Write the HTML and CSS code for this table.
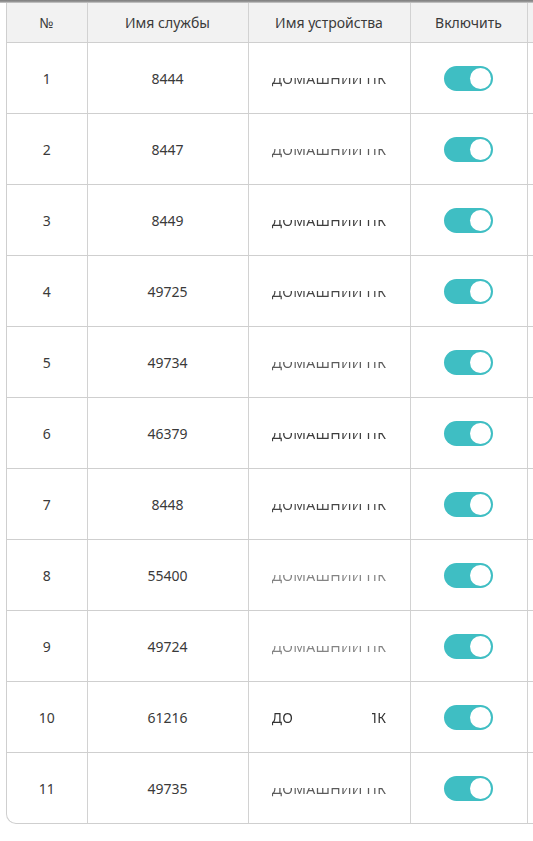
FILE: index.html
```html
<!DOCTYPE html>
<html lang="ru">
<head>
<meta charset="utf-8">
<link rel="stylesheet" href="styles.css">
</head>
<body>
<div class="topline"></div>
<div class="wrap">
<table class="grid">
<colgroup>
<col class="c-num"><col class="c-svc"><col class="c-dev"><col class="c-on"><col class="c-extra">
</colgroup>
<thead>
<tr><th>№</th><th>Имя службы</th><th>Имя устройства</th><th>Включить</th><th></th></tr>
</thead>
<tbody>
<tr><td>1</td><td>8444</td><td><span class="dev m1">ДОМАШНИЙ ПК</span></td><td><span class="sw"><span class="knob"></span></span></td><td></td></tr>
<tr><td>2</td><td>8447</td><td><span class="dev m2">ДОМАШНИЙ ПК</span></td><td><span class="sw"><span class="knob"></span></span></td><td></td></tr>
<tr><td>3</td><td>8449</td><td><span class="dev m3">ДОМАШНИЙ ПК</span></td><td><span class="sw"><span class="knob"></span></span></td><td></td></tr>
<tr><td>4</td><td>49725</td><td><span class="dev m1">ДОМАШНИЙ ПК</span></td><td><span class="sw"><span class="knob"></span></span></td><td></td></tr>
<tr><td>5</td><td>49734</td><td><span class="dev m2">ДОМАШНИЙ ПК</span></td><td><span class="sw"><span class="knob"></span></span></td><td></td></tr>
<tr><td>6</td><td>46379</td><td><span class="dev m3">ДОМАШНИЙ ПК</span></td><td><span class="sw"><span class="knob"></span></span></td><td></td></tr>
<tr><td>7</td><td>8448</td><td><span class="dev m1">ДОМАШНИЙ ПК</span></td><td><span class="sw"><span class="knob"></span></span></td><td></td></tr>
<tr><td>8</td><td>55400</td><td><span class="dev m4">ДОМАШНИЙ ПК</span></td><td><span class="sw"><span class="knob"></span></span></td><td></td></tr>
<tr><td>9</td><td>49724</td><td><span class="dev m4">ДОМАШНИЙ ПК</span></td><td><span class="sw"><span class="knob"></span></span></td><td></td></tr>
<tr><td>10</td><td>61216</td><td><span class="dev m5">ДОМАШНИЙ ПК</span></td><td><span class="sw"><span class="knob"></span></span></td><td></td></tr>
<tr class="last"><td>11</td><td>49735</td><td><span class="dev m2">ДОМАШНИЙ ПК</span></td><td><span class="sw"><span class="knob"></span></span></td><td></td></tr>
</tbody>
</table>
</div>
</body>
</html>
```
FILE: styles.css
```css
html, body {
  margin: 0;
  padding: 0;
  background: #ffffff;
}
body {
  width: 533px;
  height: 841px;
  overflow: hidden;
  font-family: "Noto Sans", "Open Sans", sans-serif;
  color: #3a3a3a;
}
.topline {
  height: 3px;
  background: linear-gradient(to bottom, #7d7d7d, #9a9a9a 60%, #d6d6d6);
}
.wrap {
  margin-left: 6px;
  width: 527px;
  border-left: 1px solid #cfcfcf;
  border-bottom: 1px solid #cfcfcf;
  border-bottom-left-radius: 10px;
  overflow: hidden;
  box-sizing: border-box;
}
.grid {
  border-collapse: collapse;
  table-layout: fixed;
  width: 620px;
}
.c-num { width: 80px; }
.c-svc { width: 161px; }
.c-dev { width: 162px; }
.c-on { width: 117px; }
.c-extra { width: 100px; }
.grid th {
  height: 39px;
  padding: 0;
  background: #f2f2f2;
  font-weight: 400;
  font-size: 14px;
  color: #3a3a3a;
  text-align: center;
  border-right: 1px solid #d2d2d2;
  border-bottom: 1px solid #cfcfcf;
}
.grid td {
  height: 70px;
  padding: 0;
  font-size: 14px;
  text-align: center;
  border-right: 1px solid #d2d2d2;
  border-bottom: 1px solid #cfcfcf;
}
.grid tr.last td {
  border-bottom: none;
}
.dev {
  display: inline-block;
  color: #333333;
  letter-spacing: 0.3px;
  -webkit-mask-image: linear-gradient(to bottom, transparent 48%, #000 48%);
  mask-image: linear-gradient(to bottom, transparent 48%, #000 48%);
}
.m1 { opacity: 0.9; }
.m2 { opacity: 0.8; }
.m3 { opacity: 0.95; }
.m4 { opacity: 0.6; }
.m5 {
  -webkit-mask-image: linear-gradient(to right, #000 18%, transparent 18%, transparent 88%, #000 88%);
  mask-image: linear-gradient(to right, #000 18%, transparent 18%, transparent 88%, #000 88%);
}
.sw {
  display: inline-flex;
  align-items: center;
  justify-content: flex-end;
  width: 49px;
  height: 25px;
  box-sizing: border-box;
  padding-right: 2px;
  border-radius: 13px;
  background: #3fbec3;
  vertical-align: middle;
}
.knob {
  width: 21px;
  height: 21px;
  border-radius: 50%;
  background: #ffffff;
}
```
